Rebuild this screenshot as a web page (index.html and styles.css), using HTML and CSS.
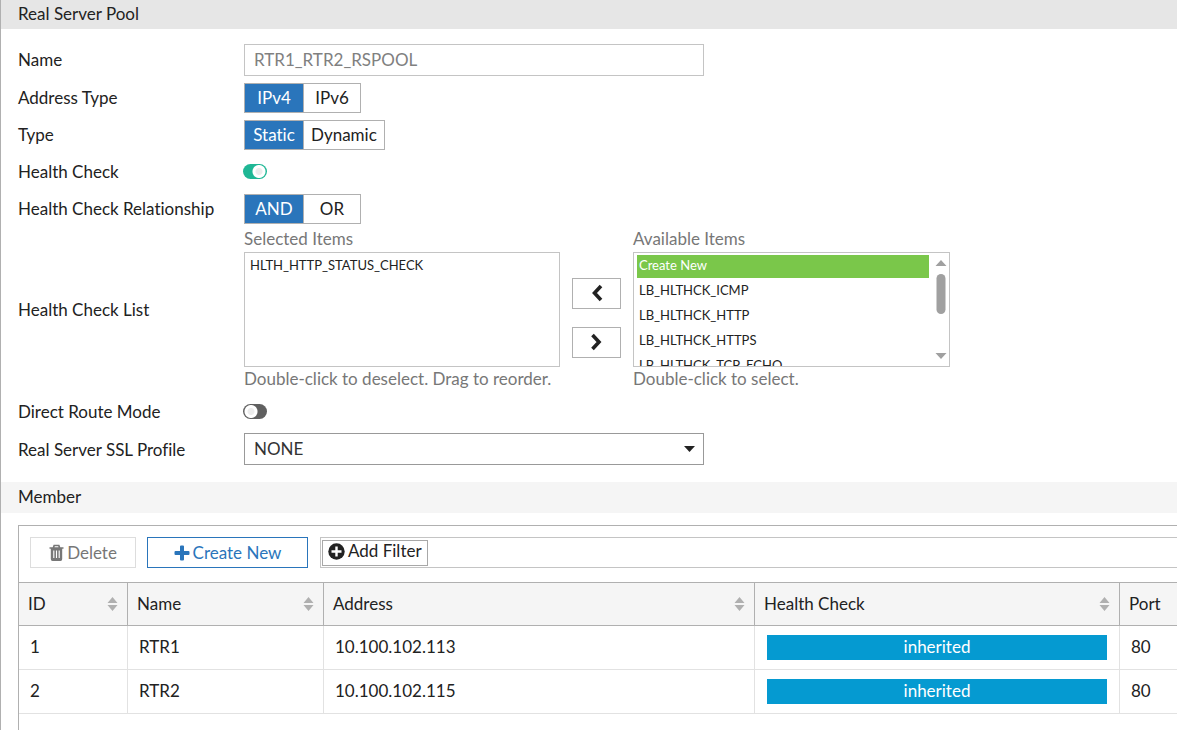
FILE: index.html
```html
<!DOCTYPE html>
<html lang="en">
<head>
<meta charset="utf-8">
<title>Real Server Pool</title>
<meta name="viewport" content="width=device-width, initial-scale=1">
<link rel="stylesheet" href="styles.css">
</head>
<body>
<svg class="sprite" aria-hidden="true">
  <symbol id="sort" viewBox="0 0 11 14"><path d="M5.500 0 10.500 6H.500zM5.500 14 .500 8h10z" fill="currentColor"/></symbol>
</svg>
<main class="page">
  <h1 class="page-title">Real Server Pool</h1>
  <form class="form">
    <div class="row row-first">
      <label class="row-label" for="name">Name</label>
      <input class="field field-name" id="name" type="text" value="RTR1_RTR2_RSPOOL" disabled>
    </div>
    <div class="row" role="radiogroup" aria-labelledby="addr-label">
      <span class="row-label" id="addr-label">Address Type</span>
      <div class="segments">
        <label class="segment"><input type="radio" name="addr" checked><span>IPv4</span></label>
        <label class="segment"><input type="radio" name="addr"><span>IPv6</span></label>
      </div>
    </div>
    <div class="row" role="radiogroup" aria-labelledby="type-label">
      <span class="row-label" id="type-label">Type</span>
      <div class="segments">
        <label class="segment"><input type="radio" name="type" checked><span>Static</span></label>
        <label class="segment"><input type="radio" name="type"><span>Dynamic</span></label>
      </div>
    </div>
    <div class="row">
      <label class="row-label" for="health">Health Check</label>
      <input class="switch" id="health" type="checkbox" checked>
    </div>
    <div class="row" role="radiogroup" aria-labelledby="rel-label">
      <span class="row-label" id="rel-label">Health Check Relationship</span>
      <div class="segments">
        <label class="segment"><input type="radio" name="rel" checked><span>AND</span></label>
        <label class="segment"><input type="radio" name="rel"><span>OR</span></label>
      </div>
    </div>
    <div class="row" role="group" aria-labelledby="list-label">
      <span class="row-label" id="list-label">Health Check List</span>
      <div class="transfer">
        <div class="transfer-side">
          <label class="caption" for="selected">Selected Items</label>
          <select class="listbox" id="selected" multiple size="4">
            <option>HLTH_HTTP_STATUS_CHECK</option>
          </select>
          <span class="caption">Double-click to deselect. Drag to reorder.</span>
        </div>
        <div class="transfer-buttons">
          <button class="move" type="button" aria-label="Select item"><svg width="12" height="18" viewBox="0 0 12 18"><path d="M10 2 3.500 9l6.500 7" fill="none" stroke="currentColor" stroke-width="3.600"/></svg></button>
          <button class="move" type="button" aria-label="Deselect item"><svg width="12" height="18" viewBox="0 0 12 18"><path d="M1.500 2 8 9l-6.500 7" fill="none" stroke="currentColor" stroke-width="3.600"/></svg></button>
        </div>
        <div class="transfer-side">
          <label class="caption" for="available">Available Items</label>
          <div class="listbox-wrap">
            <select class="listbox listbox-available" id="available" multiple size="4">
              <option class="create">Create New</option>
              <option>LB_HLTHCK_ICMP</option>
              <option>LB_HLTHCK_HTTP</option>
              <option>LB_HLTHCK_HTTPS</option>
              <option>LB_HLTHCK_TCP_ECHO</option>
            </select>
            <svg class="scrollbar" width="12" height="101" viewBox="0 0 12 101" aria-hidden="true"><path d="M6 1 11.500 7H.500zM6 100 .500 94h11z" fill="#a0a0a0"/><rect x="1.500" y="15" width="9" height="40" rx="4.500" fill="#a0a0a0"/></svg>
          </div>
          <span class="caption">Double-click to select.</span>
        </div>
      </div>
    </div>
    <div class="row row-tall">
      <label class="row-label" for="route">Direct Route Mode</label>
      <input class="switch" id="route" type="checkbox">
    </div>
    <div class="row row-tall">
      <label class="row-label" for="ssl">Real Server SSL Profile</label>
      <div class="select-wrap">
        <select class="field field-select" id="ssl"><option>NONE</option></select>
        <svg class="caret" width="11" height="6" viewBox="0 0 11 6" aria-hidden="true"><path d="M0 0h11L5.500 6z" fill="#222"/></svg>
      </div>
    </div>
  </form>
  <h2 class="section-title">Member</h2>
  <section class="panel">
    <div class="toolbar">
      <button class="btn btn-delete" type="button" disabled><svg width="15" height="17" viewBox="0 0 15 17" aria-hidden="true"><path d="M4.500 3.500 5.200 1.500h4.600l.7 2M.5 4h14" fill="none" stroke="currentColor" stroke-width="1.700"/><path d="M1.800 4h11.400v11q0 2-1.700 2h-8q-1.700 0-1.700-2z" fill="currentColor"/><path d="M4.800 6.500v7.500M7.500 6.500v7.500M10.200 6.500v7.500" stroke="#fff" stroke-width="1.100"/></svg>Delete</button>
      <button class="btn btn-create" type="button"><svg width="16" height="16" viewBox="0 0 16 16" aria-hidden="true"><path d="M7 .5h2q1 0 1 1V6h4.500q1 0 1 1v2q0 1-1 1H10v4.500q0 1-1 1H7q-1 0-1-1V10H1.500q-1 0-1-1V7q0-1 1-1H6V1.500q0-1 1-1z" fill="currentColor"/></svg>Create New</button>
      <div class="filter">
        <button class="btn-filter" type="button"><svg width="17" height="17" viewBox="0 0 17 17" aria-hidden="true"><circle cx="8.500" cy="8.500" r="8.200" fill="currentColor"/><path d="M8.500 3.500v10M3.500 8.500h10" stroke="#fff" stroke-width="2.400"/></svg>Add Filter</button>
      </div>
    </div>
    <table class="members">
      <colgroup><col class="col-id"><col class="col-name"><col><col class="col-health"><col class="col-port"></colgroup>
      <thead>
        <tr>
          <th><div class="head">ID<svg class="sort"><use href="#sort"/></svg></div></th>
          <th><div class="head">Name<svg class="sort"><use href="#sort"/></svg></div></th>
          <th><div class="head">Address<svg class="sort"><use href="#sort"/></svg></div></th>
          <th><div class="head">Health Check<svg class="sort"><use href="#sort"/></svg></div></th>
          <th><div class="head">Port</div></th>
        </tr>
      </thead>
      <tbody>
        <tr><td>1</td><td>RTR1</td><td>10.100.102.113</td><td class="status"><span class="badge">inherited</span></td><td>80</td></tr>
        <tr><td>2</td><td>RTR2</td><td>10.100.102.115</td><td class="status"><span class="badge">inherited</span></td><td>80</td></tr>
      </tbody>
    </table>
  </section>
</main>
</body>
</html>
```

FILE: styles.css
```css
* { box-sizing: border-box; }
body {
  margin: 0;
  font: 17px/24px Lato, "Liberation Sans", sans-serif;
  font-variant-ligatures: none;
  color: #222;
  background: #fff;
}
input, select, button { font: inherit; font-variant-ligatures: none; color: inherit; margin: 0; }
svg { flex: none; }
.sprite { position: absolute; width: 0; height: 0; }

.page {
  display: flex;
  flex-direction: column;
  min-height: 100vh;
  border-left: 1px solid #b0b0b0;
  overflow: hidden;
}
.page-title, .section-title {
  margin: 0;
  padding: 2px 17px 3px;
  font-size: 17px;
  font-weight: 400;
  background: #e6e6e6;
}
.section-title { padding: 3px 17px 4px; background: #f5f5f5; }

.form { padding: 11px 17px 14px; }
.row {
  display: grid;
  grid-template-columns: 226px minmax(0, 1fr);
  align-items: center;
  min-height: 37px;
}
.row-first { min-height: 39px; }
.row-tall { min-height: 38px; }
.row-label { padding-top: 1px; }

.field {
  width: 100%;
  max-width: 460px;
  height: 32px;
  padding: 0 9px;
  border: 1px solid #c4c4c4;
  border-radius: 0;
  background: #fff;
}
.field-name { color: #808080; }
.select-wrap { position: relative; max-width: 460px; }
.field-select { display: block; appearance: none; border-color: #999; color: #333; }
.caret { position: absolute; right: 9px; top: 13px; pointer-events: none; }

.segments { display: flex; }
.segment { position: relative; display: flex; cursor: pointer; }
.segment input { position: absolute; inset: 0; opacity: 0; }
.segment span {
  display: block;
  min-width: 57px;
  padding: 2px 7px;
  border: 1px solid #b0b0b0;
  border-left-width: 0;
  text-align: center;
}
.segment:first-child span { min-width: 60px; border-left-width: 1px; }
.segment input:checked + span { background: #2a75bb; color: #fff; }

.switch {
  appearance: none;
  width: 24px;
  height: 15px;
  margin-left: -1px;
  border-radius: 8px;
  background: radial-gradient(circle at 8px 50%, #ececec 3px, #fff 4px, #fff 6px, transparent 7px), #606060;
}
.switch:checked { background: radial-gradient(circle at 16px 50%, #ececec 3px, #fff 4px, #fff 6px, transparent 7px), #1fb795; }

.transfer {
  display: grid;
  grid-template-columns: minmax(0, 316px) 49px minmax(0, 317px);
  column-gap: 12px;
}
.transfer-side { display: flex; flex-direction: column; }
.caption { padding-bottom: 2px; color: #777; line-height: 23px; }
.transfer-buttons {
  display: flex;
  flex-direction: column;
  justify-content: center;
  gap: 18px;
  padding-top: 16px;
}
.move {
  display: flex;
  align-items: center;
  justify-content: center;
  height: 31px;
  padding: 0;
  border: 1px solid #b0b0b0;
  background: #fff;
}
.listbox {
  display: block;
  width: 100%;
  height: 115px;
  padding: 0 3px;
  border: 1px solid #c4c4c4;
  border-radius: 0;
  background: #fff;
  font-size: 13px;
  overflow-y: hidden;
  scrollbar-width: none;
}
.listbox option { height: 23px; margin: 2px 0; padding: 2px 2px 0; line-height: 20px; color: #222; }
.listbox-available { padding-right: 20px; }
.listbox .create { background: #7ac74a; color: #fff; }
.listbox-wrap { position: relative; }
.scrollbar { position: absolute; right: 3px; top: 7px; }

.panel {
  flex: 1;
  margin: 12px 0 0 17px;
  border-top: 1px solid #b0b0b0;
  border-left: 1px solid #b0b0b0;
}
.toolbar { display: flex; padding: 11px 0 14px 11px; }
.btn {
  display: flex;
  align-items: center;
  justify-content: center;
  gap: 3px;
  height: 31px;
  padding: 0;
  background: #fff;
}
.btn-delete { width: 106px; margin-right: 11px; border: 1px solid #ddd; color: #777; }
.btn-create { width: 161px; margin-right: 12px; border: 1px solid #2a75bb; color: #2a75bb; }
.filter {
  flex: 1;
  height: 31px;
  padding: 2px 1px;
  border: 1px solid #c4c4c4;
  border-right: 0;
}
.btn-filter {
  display: flex;
  align-items: center;
  gap: 3px;
  height: 26px;
  padding: 0 5px 4px;
  border: 1px solid #a8a8a8;
  background: #fff;
}

.members { width: 100%; table-layout: fixed; border-collapse: separate; border-spacing: 0; }
.col-id { width: 109px; }
.col-name { width: 196px; }
.col-health { width: 365px; }
.col-port { width: 57px; }
.members th {
  height: 44px;
  padding: 0 9px;
  border: 1px solid #b0b0b0;
  border-left: 0;
  background: #f5f5f5;
  font-weight: 400;
  text-align: left;
}
.members td {
  height: 44px;
  padding: 0 11px 2px;
  border-right: 1px solid #e2e2e2;
  border-bottom: 1px solid #e2e2e2;
}
.members .status { padding: 0 12px; }
.members th:last-child, .members td:last-child { border-right: 0; }
.head { display: flex; align-items: center; justify-content: space-between; }
.sort { width: 11px; height: 14px; color: #b0b0b0; }
.badge { display: block; padding-bottom: 2px; background: #059ad1; color: #fff; line-height: 23px; text-align: center; }
```
